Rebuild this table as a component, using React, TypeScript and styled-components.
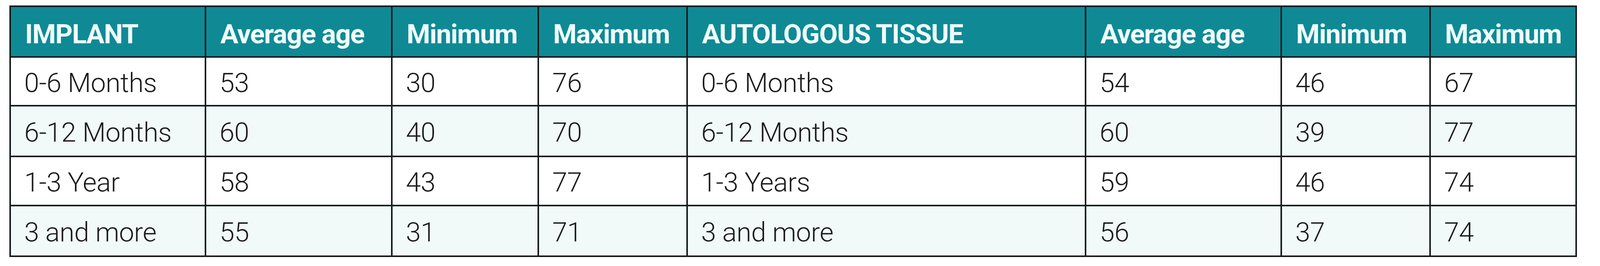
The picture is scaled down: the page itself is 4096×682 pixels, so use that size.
import React from "react";
import styled, { createGlobalStyle } from "styled-components";

const GlobalStyle = createGlobalStyle`
  html, body {
    margin: 0;
    padding: 0;
    background: #ffffff;
  }
`;

const Page = styled.div`
  padding: 14px 0 0 24px;
  font-family: Roboto, "Liberation Sans", Arial, sans-serif;
`;

// column widths include each cell's right border
const Grid = styled.div`
  display: grid;
  width: max-content;
  grid-template-columns: 500px 477px 375px 381px 1020px 501px 381px 374px;
  grid-template-rows: 130px 125px 130px 126px 130px;
  border-left: 4px solid #161b1d;
  border-top: 4px solid #0f1c21;
`;

const HeadCell = styled.div`
  box-sizing: border-box;
  display: flex;
  align-items: center;
  padding: 13px 0 0 36px;
  background: #0f8a95;
  color: #effdfd;
  font-weight: 700;
  font-size: 69px;
  letter-spacing: -1.5px;
  white-space: nowrap;
  border-right: 4px solid #161b1d;
  border-bottom: 4px solid #0f1c21;
`;

const Cell = styled.div<{ $alt: boolean }>`
  box-sizing: border-box;
  display: flex;
  align-items: center;
  padding: 7px 0 0 34px;
  background: ${p => (p.$alt ? "#f2f9f9" : "#ffffff")};
  color: #1c1c1c;
  font-weight: 300;
  font-size: 69px;
  letter-spacing: -0.5px;
  white-space: nowrap;
  border-right: 4px solid #161b1d;
  border-bottom: 4px solid #161b1d;
`;

const headers = [
  "IMPLANT",
  "Average age",
  "Minimum",
  "Maximum",
  "AUTOLOGOUS TISSUE",
  "Average age",
  "Minimum",
  "Maximum",
];

const rows = [
  ["0-6 Months", "53", "30", "76", "0-6 Months", "54", "46", "67"],
  ["6-12 Months", "60", "40", "70", "6-12 Months", "60", "39", "77"],
  ["1-3 Year", "58", "43", "77", "1-3 Years", "59", "46", "74"],
  ["3 and more", "55", "31", "71", "3 and more", "56", "37", "74"],
];

export default function App() {
  return (
    <Page>
      <GlobalStyle />
      <Grid>
        {headers.map((h, i) => (
          <HeadCell key={"h" + i}>{h}</HeadCell>
        ))}
        {rows.map((row, r) =>
          row.map((v, c) => (
            <Cell key={r + "-" + c} $alt={r % 2 === 1}>
              {v}
            </Cell>
          ))
        )}
      </Grid>
    </Page>
  );
}
